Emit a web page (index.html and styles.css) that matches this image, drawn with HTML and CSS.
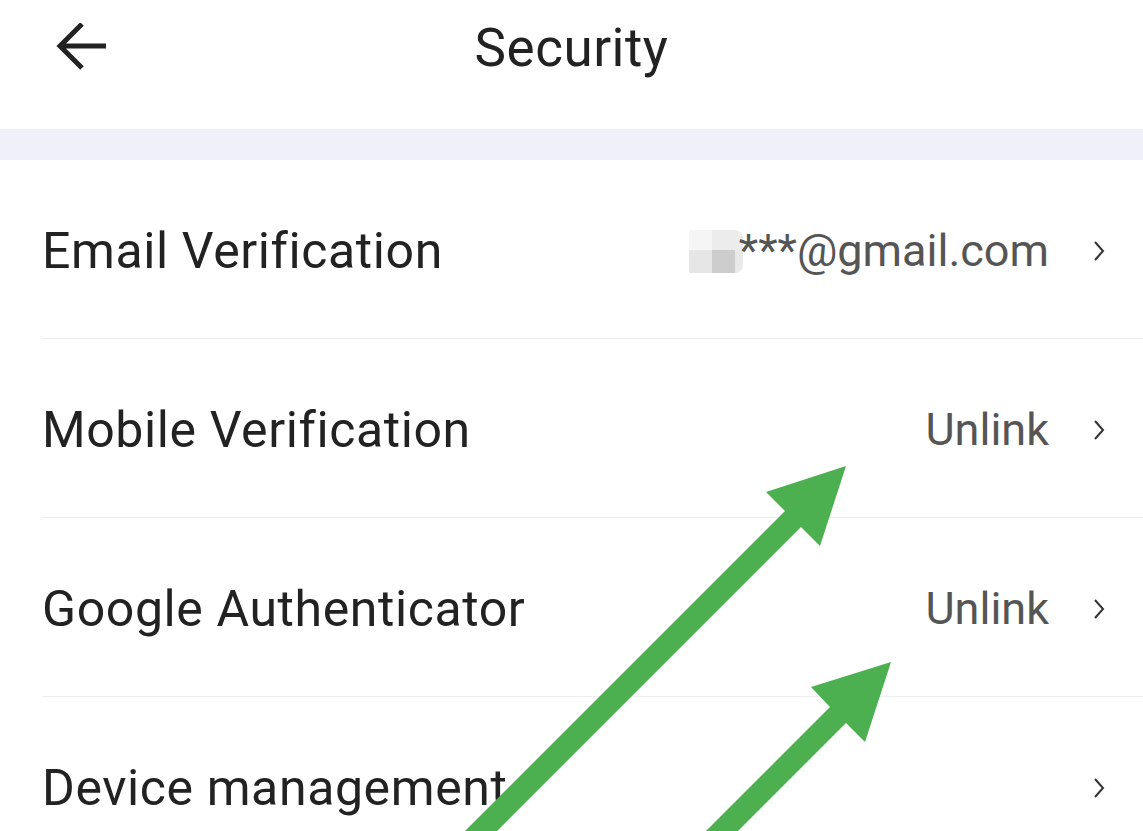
FILE: index.html
```html
<!DOCTYPE html>
<html lang="en">
<head>
<meta charset="utf-8">
<title>Security</title>
<link rel="stylesheet" href="styles.css">
</head>
<body>
<div class="page">
  <header class="topbar">
    <svg class="back" width="60" height="60" viewBox="0 0 60 60" aria-hidden="true">
      <path d="M3 23 H50 M26 1 L4 23 L26 45" fill="none" stroke="#222" stroke-width="5" stroke-linecap="butt" stroke-linejoin="miter"/>
    </svg>
    <h1 class="title">Security</h1>
  </header>
  <div class="band"></div>
  <ul class="list">
    <li class="row">
      <span class="label">Email Verification</span>
      <span class="value"><span class="blur"><i class="b1"></i><i class="b2"></i><i class="b5"></i><i class="b3"></i><i class="b4"></i><i class="b6"></i></span>***@gmail.com</span>
      <svg class="chev" width="12" height="22" viewBox="0 0 12 22" aria-hidden="true"><path d="M2 2 L10 11 L2 20" fill="none" stroke="#333" stroke-width="2"/></svg>
    </li>
    <li class="row">
      <span class="label">Mobile Verification</span>
      <span class="value">Unlink</span>
      <svg class="chev" width="12" height="22" viewBox="0 0 12 22" aria-hidden="true"><path d="M2 2 L10 11 L2 20" fill="none" stroke="#333" stroke-width="2"/></svg>
    </li>
    <li class="row">
      <span class="label">Google Authenticator</span>
      <span class="value">Unlink</span>
      <svg class="chev" width="12" height="22" viewBox="0 0 12 22" aria-hidden="true"><path d="M2 2 L10 11 L2 20" fill="none" stroke="#333" stroke-width="2"/></svg>
    </li>
    <li class="row">
      <span class="label">Device management</span>
      <span class="value"></span>
      <svg class="chev" width="12" height="22" viewBox="0 0 12 22" aria-hidden="true"><path d="M2 2 L10 11 L2 20" fill="none" stroke="#333" stroke-width="2"/></svg>
    </li>
  </ul>
  <svg class="arrows" width="1143" height="831" viewBox="0 0 1143 831" aria-hidden="true">
    <polygon fill="#4caf50" points="846,466 820,546 801,527 478,850 446,850 785,511 766,492"/>
    <polygon fill="#4caf50" points="891,662 865,742 846,723 719,850 687,850 830,707 811,687"/>
  </svg>
</div>
</body>
</html>
```
FILE: styles.css
```css
html, body {
  margin: 0;
  padding: 0;
  background: #ffffff;
}
body {
  font-family: Roboto, "Noto Sans", Arial, sans-serif;
  color: #222222;
  overflow: hidden;
}
.page {
  position: relative;
  width: 1143px;
  height: 831px;
  overflow: hidden;
}
.topbar {
  height: 129px;
  display: flex;
  align-items: center;
  justify-content: center;
  position: relative;
}
.back {
  position: absolute;
  left: 56px;
  top: 23px;
}
.title {
  margin: 0;
  margin-top: -33px;
  font-size: 53px;
  font-weight: 400;
  color: #222;
  letter-spacing: 0.5px;
}
.band {
  height: 31px;
  background: #f0f1f8;
}
.list {
  list-style: none;
  margin: 0;
  padding: 0 0 0 42px;
}
.row {
  height: 179px;
  box-sizing: border-box;
  padding-top: 3px;
  display: flex;
  align-items: center;
  border-bottom: 1px solid #ededf2;
  padding-right: 38px;
}
.label {
  flex: 1;
  font-size: 50px;
  color: #222;
  letter-spacing: 0.6px;
}
.value {
  display: flex;
  align-items: center;
  font-size: 45px;
  color: #555;
  margin-right: 44px;
}
.blur {
  display: grid;
  grid-template-columns: 23px 23px 8px;
  grid-template-rows: 20px 23px;
  margin-right: -4px;
  margin-top: 2px;
}
.blur i { display: block; }
.b1 { background: #f5f5f5; }
.b2 { background: #ececec; }
.b5 { background: #ececec; border-radius: 0 10px 0 0; }
.b3 { background: #e6e6e6; }
.b4 { background: #cdcdcd; }
.b6 { background: #e9e9e9; border-radius: 0 0 8px 0; }
.chev {
  flex: none;
}
.arrows {
  position: absolute;
  left: 0;
  top: 0;
  pointer-events: none;
}
```
